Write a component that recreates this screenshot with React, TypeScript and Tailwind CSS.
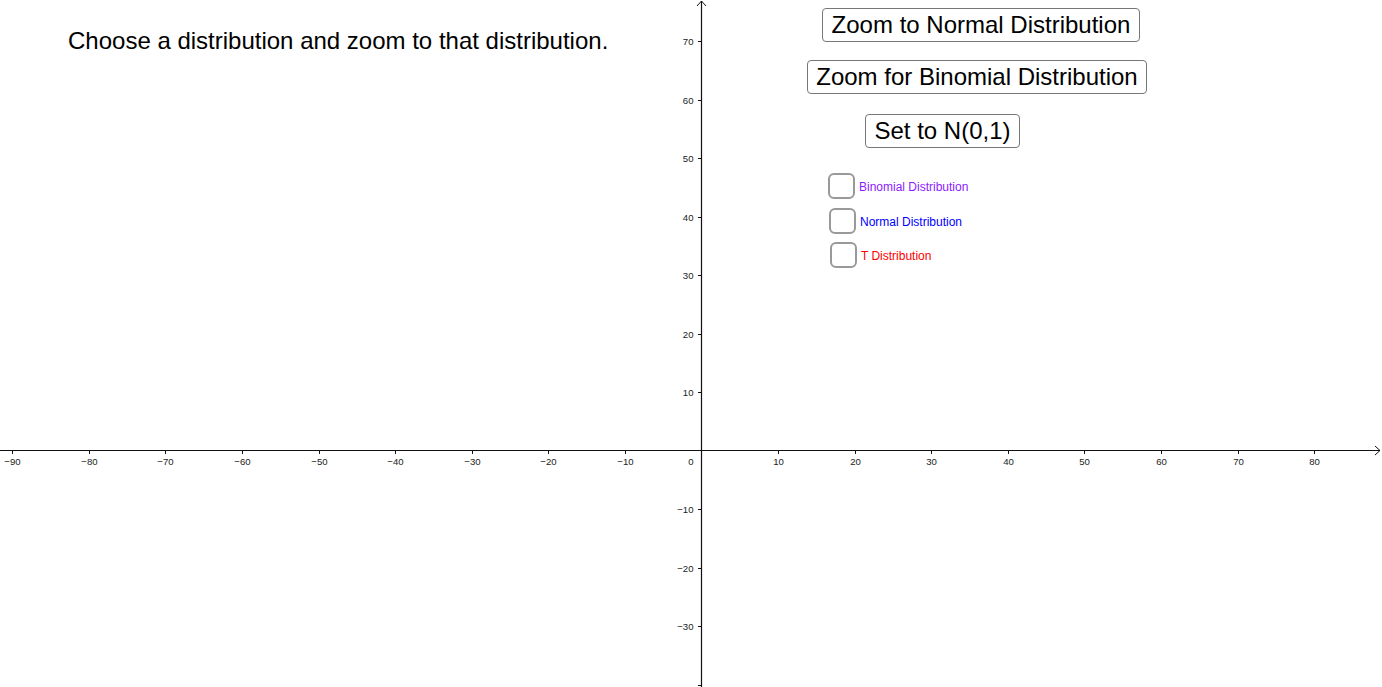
import React from "react";

const X0 = 701.5;
const Y0 = 450.5;
const SX = 7.6575;
const SY = 5.85;

const fmt = (v: number) => (v < 0 ? "\u2212" + Math.abs(v) : String(v));

function Axes() {
  const xs: number[] = [];
  for (let v = -90; v <= 80; v += 10) if (v !== 0) xs.push(v);
  const ys: number[] = [];
  for (let v = -40; v <= 70; v += 10) if (v !== 0) ys.push(v);
  return (
    <svg
      className="absolute inset-0"
      width={1382}
      height={687}
      viewBox="0 0 1382 687"
      style={{ fontFamily: '"Liberation Sans", Arial, sans-serif' }}
    >
      <line x1={0} y1={Y0} x2={1380} y2={Y0} stroke="#111" strokeWidth={1.2} />
      <polyline points="1375,446 1380,450.5 1375,455" fill="none" stroke="#111" strokeWidth={1} />
      <line x1={X0} y1={1} x2={X0} y2={687} stroke="#111" strokeWidth={1.2} />
      <polyline points="697,6 701.5,1 706,6" fill="none" stroke="#111" strokeWidth={1} />
      {xs.map((v) => {
        const x = Math.round(X0 + v * SX) + 0.5;
        return (
          <g key={"x" + v}>
            <line x1={x} y1={Y0} x2={x} y2={Y0 + 3.5} stroke="#111" strokeWidth={1} />
            <text x={x} y={464.5} fontSize={9.6} fill="#222" textAnchor="middle">
              {fmt(v)}
            </text>
          </g>
        );
      })}
      <text x={691} y={464.5} fontSize={9.6} fill="#222" textAnchor="middle">
        0
      </text>
      {ys.map((v) => {
        const y = Math.round(Y0 - v * SY) + 0.5;
        return (
          <g key={"y" + v}>
            <line x1={X0 - 3.5} y1={y} x2={X0} y2={y} stroke="#111" strokeWidth={1} />
            {v > -40 && (
              <text x={693.5} y={y + 3.5} fontSize={9.6} fill="#222" textAnchor="end">
                {fmt(v)}
              </text>
            )}
          </g>
        );
      })}
    </svg>
  );
}

function Check({ label, color, indent }: { label: string; color: string; indent: string }) {
  return (
    <div className={`flex items-center gap-[4px] ${indent}`}>
      <div className="w-[27px] h-[26px] border-2 border-[#999] rounded-[6px] bg-white" />
      <span className={`pt-[2px] ${color}`}>{label}</span>
    </div>
  );
}

const btn =
  "absolute h-[34px] border border-[#777] rounded-[4px] bg-white flex items-center justify-center text-[24px] leading-[24px] whitespace-nowrap";

export default function App() {
  return (
    <div
      className="relative w-[1382px] h-[687px] overflow-hidden bg-white text-black"
      style={{ fontFamily: '"Liberation Sans", Arial, sans-serif' }}
    >
      <Axes />
      <div className="absolute left-[68px] top-[29px] text-[24px] leading-[24px] whitespace-nowrap">
        Choose a distribution and zoom to that distribution.
      </div>

      <div className={`${btn} left-[822px] top-[8px] w-[318px]`}>Zoom to Normal Distribution</div>
      <div className={`${btn} left-[807px] top-[60px] w-[340px]`}>Zoom for Binomial Distribution</div>
      <div className={`${btn} left-[865px] top-[114px] w-[155px]`}>Set to N(0,1)</div>

      <div className="absolute left-[828px] top-[173px] flex flex-col gap-[8px] text-[12px] leading-[12px] whitespace-nowrap">
        <Check label="Binomial Distribution" color="text-[#8c1aff]" indent="ml-0" />
        <Check label="Normal Distribution" color="text-[#0000ff]" indent="ml-[1px] mt-[1px]" />
        <Check label="T Distribution" color="text-[#ff0000]" indent="ml-[2px]" />
      </div>
    </div>
  );
}
